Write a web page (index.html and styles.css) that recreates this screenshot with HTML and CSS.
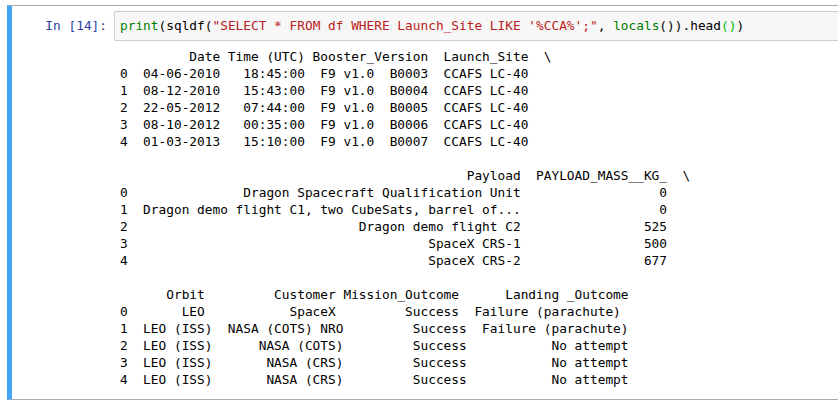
FILE: index.html
```html
<!DOCTYPE html>
<html>
<head>
<meta charset="utf-8">
<link rel="stylesheet" href="styles.css">
</head>
<body>
<div class="notebook">
  <div class="cell">
    <div class="input-row">
      <div class="prompt">In&nbsp;[14]:</div>
      <div class="input-area"><pre class="code"><span class="kw">print</span>(sqldf(<span class="str">"SELECT * FROM df WHERE Launch_Site LIKE '%CCA%';"</span>, <span class="kw">locals</span>()).head<span class="match">()</span>)</pre></div>
    </div>
    <div class="output-row">
<pre class="output">         Date Time (UTC) Booster_Version  Launch_Site  \
0  04-06-2010   18:45:00  F9 v1.0  B0003  CCAFS LC-40   
1  08-12-2010   15:43:00  F9 v1.0  B0004  CCAFS LC-40   
2  22-05-2012   07:44:00  F9 v1.0  B0005  CCAFS LC-40   
3  08-10-2012   00:35:00  F9 v1.0  B0006  CCAFS LC-40   
4  01-03-2013   15:10:00  F9 v1.0  B0007  CCAFS LC-40   

                                             Payload  PAYLOAD_MASS__KG_  \
0               Dragon Spacecraft Qualification Unit                  0   
1  Dragon demo flight C1, two CubeSats, barrel of...                  0   
2                              Dragon demo flight C2                525   
3                                       SpaceX CRS-1                500   
4                                       SpaceX CRS-2                677   

      Orbit         Customer Mission_Outcome      Landing _Outcome
0       LEO           SpaceX         Success  Failure (parachute)
1  LEO (ISS)  NASA (COTS) NRO         Success  Failure (parachute)
2  LEO (ISS)      NASA (COTS)         Success           No attempt
3  LEO (ISS)       NASA (CRS)         Success           No attempt
4  LEO (ISS)       NASA (CRS)         Success           No attempt</pre>
    </div>
  </div>
</div>
</body>
</html>
```
FILE: styles.css
```css
html, body {
  margin: 0;
  padding: 0;
  background: #ffffff;
}

.notebook {
  padding: 5px 0 0 7px;
}

.cell {
  border-top: 1px solid #ababab;
  border-bottom: 1px solid #ababab;
  border-left: 5px solid #42a5f5;
  padding: 5px 0 11px 0;
  display: flex;
  flex-direction: column;
}

.input-row {
  display: flex;
  align-items: flex-start;
}

.prompt {
  width: 102px;
  box-sizing: border-box;
  padding: 6px 7px 0 0;
  text-align: right;
  font-family: "DejaVu Sans Mono", monospace;
  font-size: 12.8px;
  line-height: 17px;
  color: #303f9f;
  white-space: nowrap;
}

.input-area {
  flex: 1;
  background: #f7f7f7;
  border: 1px solid #cfcfcf;
  border-right: none;
  border-radius: 2px 0 0 2px;
  padding: 5px 0 6px 5px;
  overflow: hidden;
}

pre {
  margin: 0;
  font-family: "DejaVu Sans Mono", monospace;
  font-size: 12.8px;
  line-height: 17px;
  color: #000;
}

.code .kw { color: #008000; }
.code .str { color: #ba2121; }
.code .match { color: #00bb00; }

.output-row {
  display: flex;
  padding: 7px 0 0 108px;
}

.output {
  color: #000;
}
```
